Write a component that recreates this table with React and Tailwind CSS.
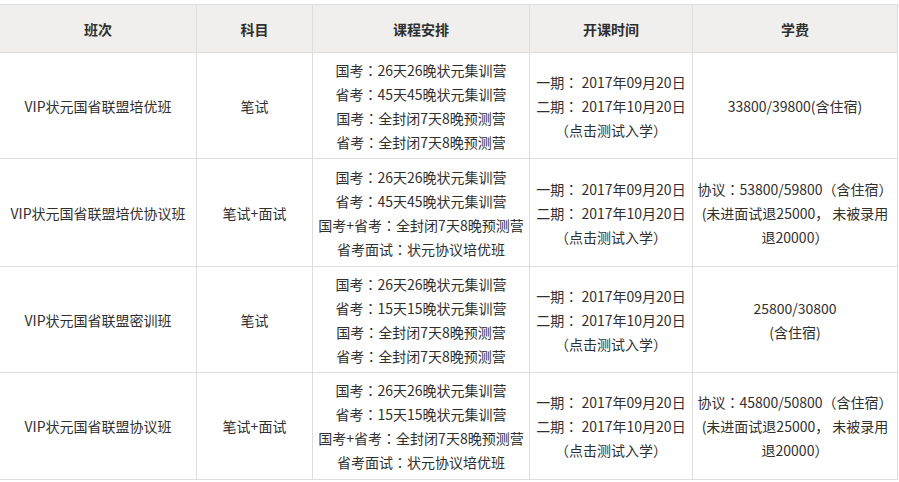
import React from 'react';

const rows = [
  {
    name: 'VIP状元国省联盟培优班',
    subject: '笔试',
    course: ['国考：26天26晚状元集训营', '省考：45天45晚状元集训营', '国考：全封闭7天8晚预测营', '省考：全封闭7天8晚预测营'],
    fee: ['33800/39800(含住宿)'],
    h: 'h-[106px]',
  },
  {
    name: 'VIP状元国省联盟培优协议班',
    subject: '笔试+面试',
    course: ['国考：26天26晚状元集训营', '省考：45天45晚状元集训营', '国考+省考：全封闭7天8晚预测营', '省考面试：状元协议培优班'],
    fee: ['协议：53800/59800（含住宿）', '(未进面试退25000， 未被录用', '退20000）'],
    h: 'h-[108px]',
  },
  {
    name: 'VIP状元国省联盟密训班',
    subject: '笔试',
    course: ['国考：26天26晚状元集训营', '省考：15天15晚状元集训营', '国考：全封闭7天8晚预测营', '省考：全封闭7天8晚预测营'],
    fee: ['25800/30800', '(含住宿)'],
    h: 'h-[106px]',
  },
  {
    name: 'VIP状元国省联盟协议班',
    subject: '笔试+面试',
    course: ['国考：26天26晚状元集训营', '省考：15天15晚状元集训营', '国考+省考：全封闭7天8晚预测营', '省考面试：状元协议培优班'],
    fee: ['协议：45800/50800（含住宿）', '(未进面试退25000， 未被录用', '退20000）'],
    h: 'h-[107px]',
  },
];

const cell = 'border border-[#dddddd] text-center align-middle p-0';

// the screenshot's font sets the full-width colon in the middle of its box
const Line = ({ text }) => {
  const parts = text.split('：');
  return (
    <div>
      {parts.map((p, i) => (
        <React.Fragment key={i}>
          {i > 0 && <span style={{ fontFamily: '"Noto Sans CJK JP", sans-serif' }}>：</span>}
          {p}
        </React.Fragment>
      ))}
    </div>
  );
};

export default function App() {
  return (
    <div className="w-[899px] h-[482px] overflow-hidden bg-white pt-[4px]">
      <table
        className="table-fixed border-collapse ml-[-1px] w-[899px] text-[14px] leading-[24px] text-[#2f2f2f]"
        style={{ fontFamily: '"Noto Sans CJK SC", "Noto Sans", sans-serif' }}
      >
        <colgroup>
          <col className="w-[197px]" />
          <col className="w-[116px]" />
          <col className="w-[217px]" />
          <col className="w-[163px]" />
          <col className="w-[205px]" />
        </colgroup>
        <thead>
          <tr className="h-[48px] bg-[#f0efed]">
            {['班次', '科目', '课程安排', '开课时间', '学费'].map((t) => (
              <th key={t} className={`${cell} font-bold`}>{t}</th>
            ))}
          </tr>
        </thead>
        <tbody>
          {rows.map((r) => (
            <tr key={r.name} className={r.h}>
              <td className={cell}>{r.name}</td>
              <td className={cell}>{r.subject}</td>
              <td className={`${cell} whitespace-nowrap`}>
                {r.course.map((c) => (
                  <Line key={c} text={c} />
                ))}
              </td>
              <td className={`${cell} whitespace-nowrap`}>
                <Line text={'一期：\u00a02017年09月20日'} />
                <Line text={'二期：\u00a02017年10月20日'} />
                <div>（点击测试入学）</div>
              </td>
              <td className={`${cell} whitespace-nowrap`}>
                {r.fee.map((f) => (
                  <Line key={f} text={f} />
                ))}
              </td>
            </tr>
          ))}
        </tbody>
      </table>
    </div>
  );
}
